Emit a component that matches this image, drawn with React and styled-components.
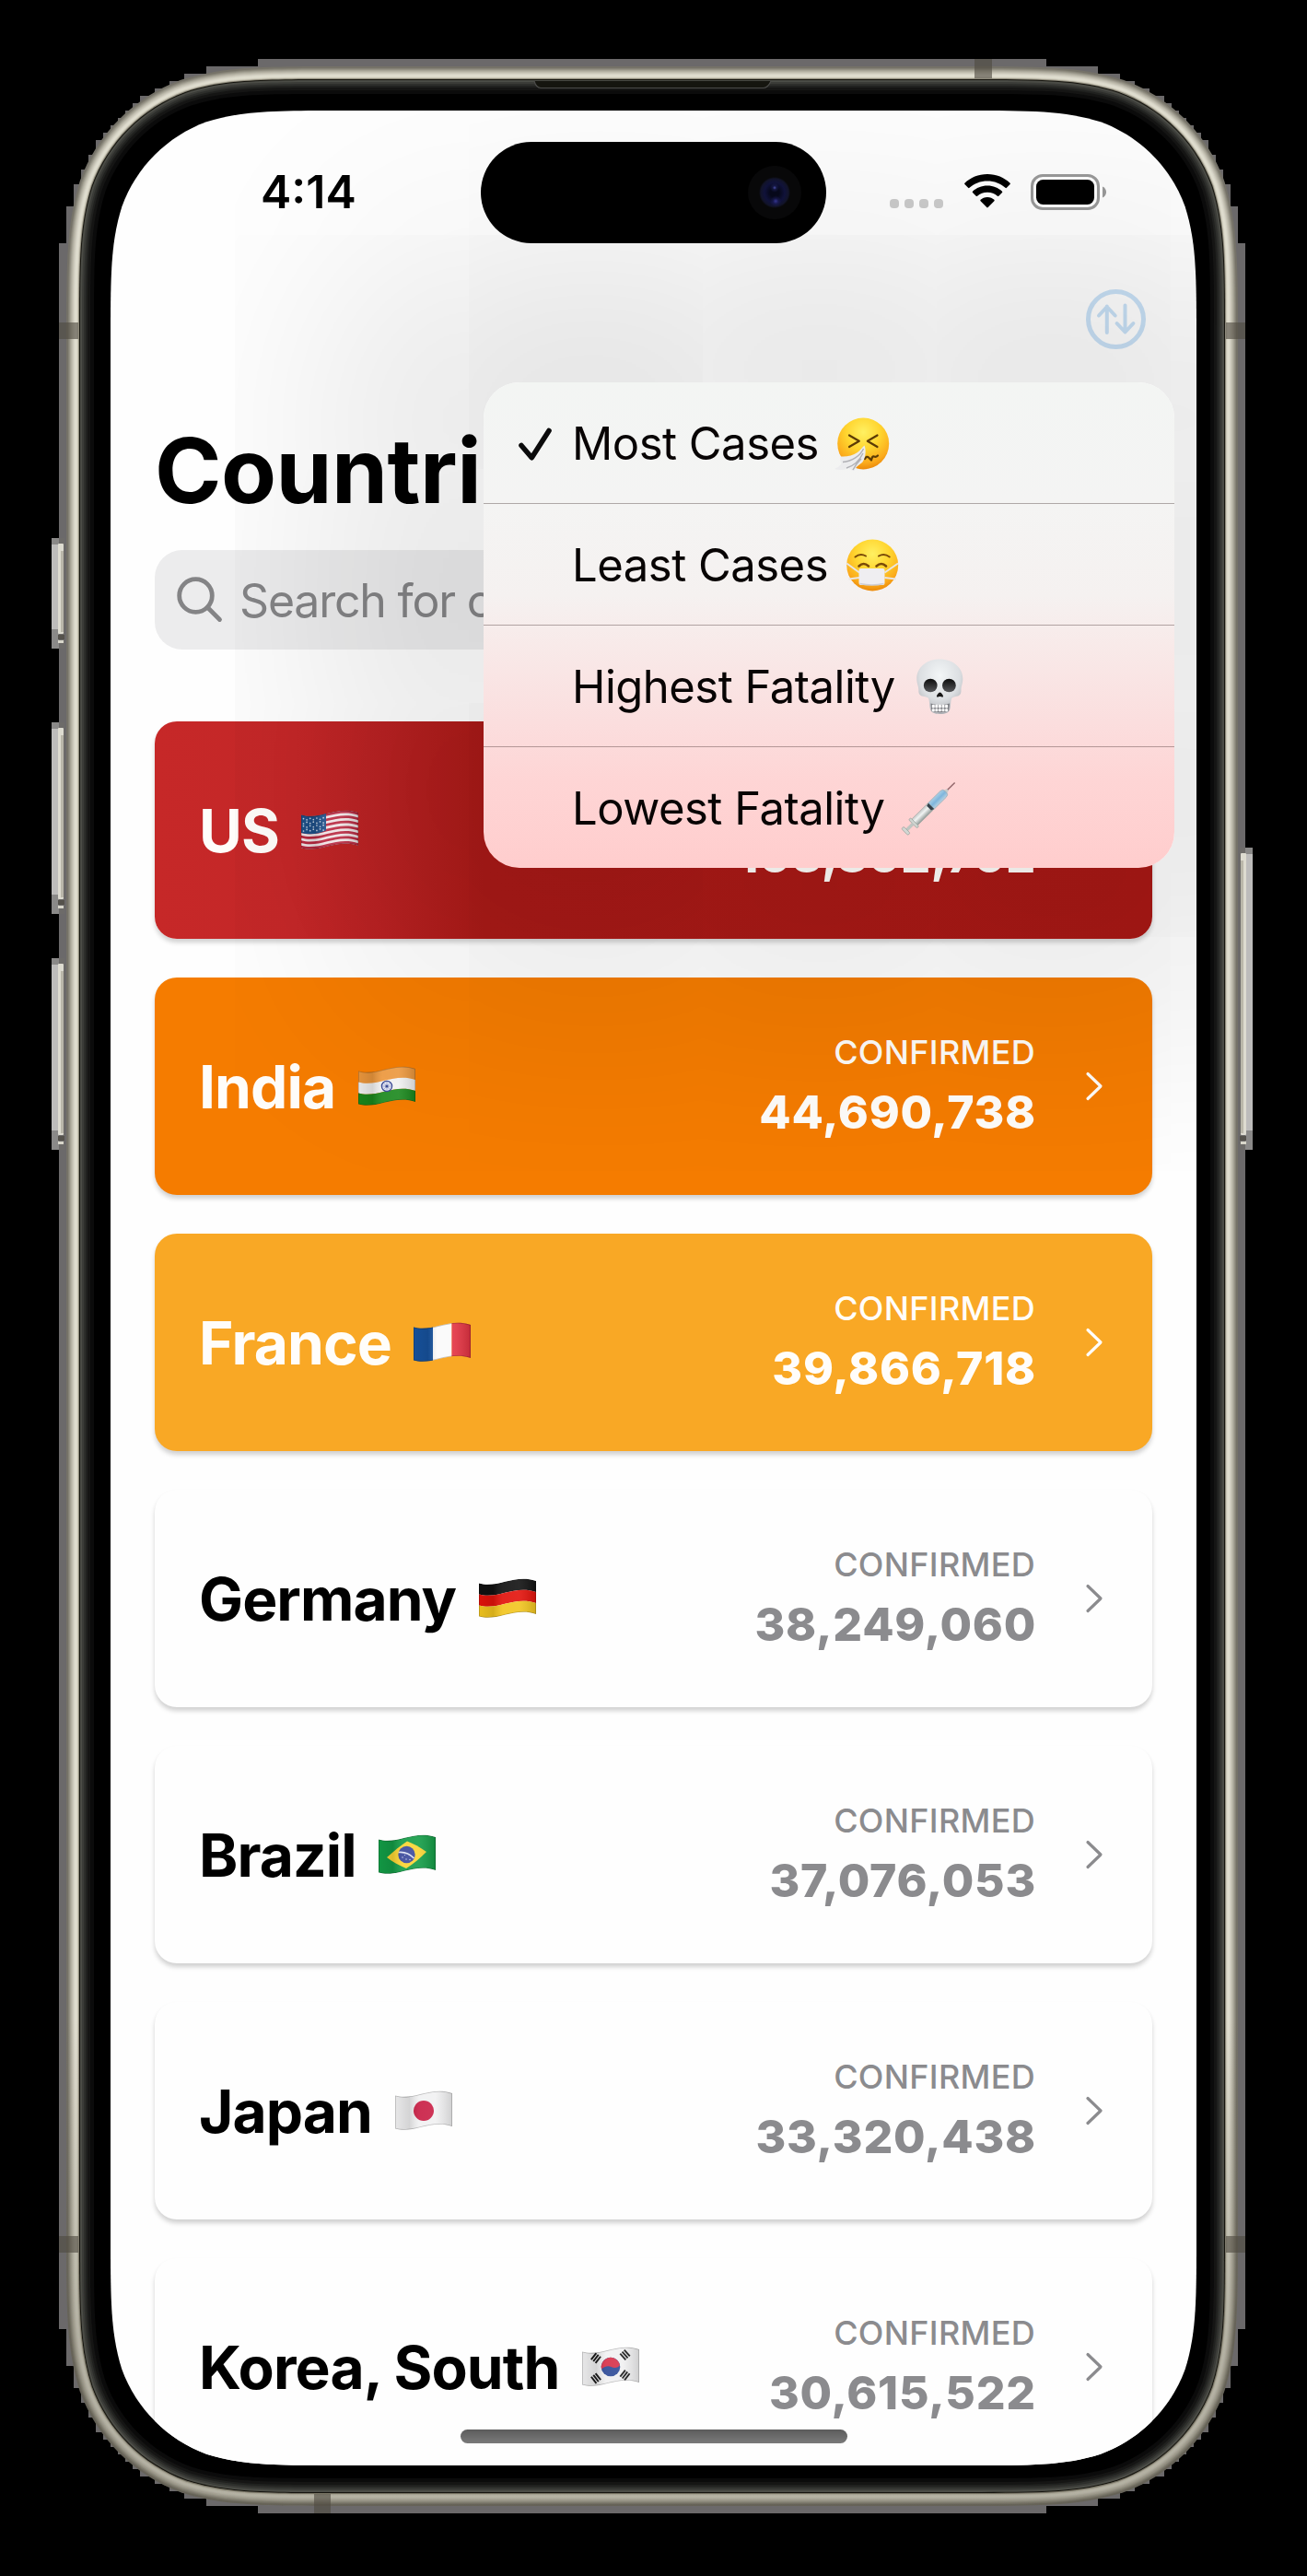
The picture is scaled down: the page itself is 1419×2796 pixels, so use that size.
import React from 'react';
import styled, { createGlobalStyle } from 'styled-components';

const GlobalStyle = createGlobalStyle`
  *, *::before, *::after { box-sizing: border-box; }
  html, body { margin: 0; padding: 0; background: #000; }
  body { font-family: Inter, "Liberation Sans", sans-serif; }
`;

/* ---------- geometry helpers ---------- */

/* Rounded rectangle with continuous (iOS style) corners. */
function squircle(x, y, w, h, r) {
  const A = 1.528665, B = 1.08849, C = 0.86841, D = 0.63149, E = 0.07491, F = 0.37282, G = 0.16906;
  const X = x + w;
  const Y = y + h;
  const p = (px, py) => `${px.toFixed(2)} ${py.toFixed(2)}`;
  return [
    `M${p(x + A * r, y)}L${p(X - A * r, y)}`,
    `C${p(X - B * r, y)} ${p(X - C * r, y)} ${p(X - D * r, y + E * r)}`,
    `C${p(X - F * r, y + G * r)} ${p(X - G * r, y + F * r)} ${p(X - E * r, y + D * r)}`,
    `C${p(X, y + C * r)} ${p(X, y + B * r)} ${p(X, y + A * r)}`,
    `L${p(X, Y - A * r)}`,
    `C${p(X, Y - B * r)} ${p(X, Y - C * r)} ${p(X - E * r, Y - D * r)}`,
    `C${p(X - G * r, Y - F * r)} ${p(X - F * r, Y - G * r)} ${p(X - D * r, Y - E * r)}`,
    `C${p(X - C * r, Y)} ${p(X - B * r, Y)} ${p(X - A * r, Y)}`,
    `L${p(x + A * r, Y)}`,
    `C${p(x + B * r, Y)} ${p(x + C * r, Y)} ${p(x + D * r, Y - E * r)}`,
    `C${p(x + F * r, Y - G * r)} ${p(x + G * r, Y - F * r)} ${p(x + E * r, Y - D * r)}`,
    `C${p(x, Y - C * r)} ${p(x, Y - B * r)} ${p(x, Y - A * r)}`,
    `L${p(x, y + A * r)}`,
    `C${p(x, y + B * r)} ${p(x, y + C * r)} ${p(x + E * r, y + D * r)}`,
    `C${p(x + G * r, y + F * r)} ${p(x + F * r, y + G * r)} ${p(x + D * r, y + E * r)}`,
    `C${p(x + C * r, y)} ${p(x + B * r, y)} ${p(x + A * r, y)}Z`,
  ].join('');
}

/* Stepped silhouette of the outer edge: [x, bottom of that step]. */
const STEPS = [
  [280, 72], [224, 80], [200, 88], [184, 96], [168, 104], [152, 112], [144, 120], [136, 128], [128, 136],
  [120, 144], [112, 152], [104, 168], [96, 184], [88, 200], [80, 224], [72, 264], [64, 300],
];

function steppedEdge() {
  const left = [];
  let top = 64;
  STEPS.forEach(([x, bottom]) => {
    left.push([x, top], [x, bottom]);
    top = bottom;
  });
  const right = left.map(([x, y]) => [1416 - x, y]);
  const down = (pts) => pts.map(([x, y]) => [x, 2792 - y]);
  const all = [...right, ...down(right).reverse(), ...down(left), ...left.slice().reverse()];
  return all.map((q) => q.join(',')).join(' ');
}

const METAL = [
  [8, '#757268'], [10, '#858276'], [11, '#949184'], [12, '#a5a295'], [13, '#b3b0a2'], [14, '#c0bdaf'],
  [15, '#cbc8ba'], [16, '#d6d3c6'], [17, '#dddbcd'], [18, '#e0decf'], [19, '#dbd8ca'], [20, '#cac7b7'],
  [21, '#8d897a'], [22, '#15140e'], [23, '#4b4c46'], [25, '#3b3c38'], [27, '#2d2e2b'], [29, '#20211f'],
  [31, '#151514'], [34, '#0b0b0b'], [38, '#000'],
];

/* ---------- hardware ---------- */

const HardwareSvg = styled.svg`
  position: absolute;
  inset: 0;
  pointer-events: none;
`;

function SideKey({ x, y, h, flip }) {
  return (
    <g transform={flip ? `translate(${x + 14} ${y}) scale(-1 1)` : `translate(${x} ${y})`}>
      <rect width="14" height={h} fill="#6d6b69" />
      <rect width="8" height={h} fill="#8a8988" />
      <rect y="7" width="7" height={h - 28} fill="#bdbcbb" />
      <rect x="7" y="6" width="6" height={h - 22} rx="1" fill="#dddbd0" />
      <rect x="10" y="14" width="3" height={h - 32} fill="#bab7aa" />
      <rect x="7" y={h - 15} width="7" height="5" fill="#55524c" />
      <rect x="7" y={h - 9} width="6" height="3" fill="#d8d6ca" />
    </g>
  );
}

function Hardware() {
  return (
    <HardwareSvg width="1419" height="2796" viewBox="0 0 1419 2796" aria-hidden="true">
      <defs>
        <linearGradient id="hwShade" x1="0" y1="0" x2="0" y2="1">
          <stop offset="0.8" stopColor="#3a3628" stopOpacity="0" />
          <stop offset="0.93" stopColor="#3a3628" stopOpacity="0.26" />
          <stop offset="1" stopColor="#3a3628" stopOpacity="0.26" />
        </linearGradient>
      </defs>
      <polygon points={steppedEdge()} fill="#6b696a" shapeRendering="crispEdges" />
      {METAL.map(([inset, color]) => (
        <path
          key={inset}
          d={squircle(64 + inset, 64 + inset, 1288 - 2 * inset, 2664 - 2 * inset, 205 - inset)}
          fill={color}
        />
      ))}
      <path
        fillRule="evenodd"
        fill="url(#hwShade)"
        d={squircle(72, 72, 1272, 2648, 197) + squircle(86, 86, 1244, 2620, 183)}
      />
      <SideKey x={56} y={584} h={120} />
      <SideKey x={56} y={784} h={208} />
      <SideKey x={56} y={1040} h={208} />
      <SideKey x={1346} y={920} h={328} flip />
      <g fill="#4f4b40" fillOpacity="0.62">
        <rect x="64" y="350" width="21" height="18" />
        <rect x="1331" y="350" width="21" height="18" />
        <rect x="64" y="2427" width="21" height="18" />
        <rect x="1331" y="2427" width="21" height="18" />
        <rect x="1058" y="64" width="19" height="21" />
        <rect x="341" y="2707" width="18" height="21" />
      </g>
      <path d="M580 88 Q582 95 587 95.500 H829 Q834 95 837 88 Z" fill="#15150f" />
      <path d="M580 88 Q582 95 587 95.500 H829 Q834 95 837 88" fill="none" stroke="#4c4c4a" strokeWidth="1.200" />
    </HardwareSvg>
  );
}

/* ---------- icons ---------- */

const Icon = styled.svg`
  display: block;
  flex: none;
  overflow: visible;
`;

const SignalDots = styled.div`
  display: flex;
  gap: 6px;
  margin-top: 26px;
  & > i {
    width: 10px;
    height: 10px;
    border-radius: 4px;
    background: #cbcbcb;
  }
`;

const WifiIcon = () => (
  <Icon width="50" height="38" viewBox="0 0 50 38" fill="#000" aria-label="Wi-Fi">
    <path d="M25 0C34.800 0 43.300 3.700 49.600 9.700Q50.300 10.400 49.600 11.100L45.900 14.800Q45.200 15.500 44.500 14.800C39.400 10 32.600 7.400 25 7.400S10.600 10 5.500 14.800Q4.800 15.500 4.100 14.800L.4 11.100Q-.3 10.400.4 9.700C6.700 3.700 15.200 0 25 0Z" />
    <path d="M25 12.500C31.400 12.500 36.900 14.900 41 18.700Q41.700 19.400 41 20.100L37.300 23.700Q36.600 24.400 35.900 23.800C33 21.300 29.300 19.800 25 19.800S17 21.300 14.100 23.800Q13.400 24.400 12.700 23.700L9 20.100Q8.300 19.400 9 18.700C13.100 14.900 18.600 12.500 25 12.500Z" />
    <path d="M25 25C28 25 30.500 26.100 32.400 27.800Q33.100 28.500 32.400 29.200L25.700 36Q25 36.800 24.300 36L17.600 29.200Q16.900 28.500 17.600 27.800C19.500 26.100 22 25 25 25Z" />
  </Icon>
);

const BatteryIcon = () => (
  <Icon width="83" height="39" viewBox="0 0 83 39" aria-label="Battery">
    <rect x="1.500" y="1.500" width="72" height="36" rx="11.500" fill="none" stroke="#9a9a9a" strokeWidth="3" />
    <rect x="6" y="6" width="63" height="27" rx="7.500" fill="#000" />
    <path d="M78 13.500C80.700 14.700 82 17 82 19.500S80.700 24.300 78 25.500Z" fill="#9a9a9a" />
  </Icon>
);

const SortIcon = () => (
  <Icon width="65" height="65" viewBox="0 0 65 65" fill="none" stroke="#c8e0f6" aria-label="Sort">
    <circle cx="32.500" cy="32.500" r="30" strokeWidth="5" />
    <path
      d="M22.800 47V18.500M14 28.500L22.800 19L31.700 28.500M42.500 17.500V46.500M33.600 37L42.500 46.500L51.400 37"
      strokeWidth="4"
      strokeLinecap="round"
      strokeLinejoin="round"
    />
  </Icon>
);

const SearchIcon = () => (
  <Icon width="50" height="50" viewBox="0 0 50 50" fill="none" stroke="#848486" strokeWidth="4.800" aria-hidden="true">
    <circle cx="20.500" cy="20.500" r="17.800" />
    <path d="M33.300 33.300L46.500 46.500" strokeLinecap="round" />
  </Icon>
);

const CheckIcon = () => (
  <Icon width="36" height="40" viewBox="0 0 36 40" fill="none" aria-label="Selected">
    <path d="M3 22.500L14.300 35.700L33 6.500" stroke="#0b0b0b" strokeWidth="5.600" strokeLinecap="round" strokeLinejoin="round" />
  </Icon>
);

const ChevronIcon = ({ color }) => (
  <Icon width="18" height="32" viewBox="0 0 18 32" fill="none" aria-hidden="true">
    <path d="M2 2.500L16 16L2 29.500" stroke={color} strokeWidth="3.200" strokeLinecap="round" strokeLinejoin="round" />
  </Icon>
);

/* ---------- emoji ---------- */

const FaceBase = ({ id }) => (
  <>
    <defs>
      <radialGradient id={id} cx="0.5" cy="0.28" r="0.74">
        <stop offset="0" stopColor="#fff062" />
        <stop offset="0.45" stopColor="#ffd52f" />
        <stop offset="0.8" stopColor="#fbab1c" />
        <stop offset="1" stopColor="#e98407" />
      </radialGradient>
    </defs>
    <circle cx="30.200" cy="30.500" r="28" fill={`url(#${id})`} />
  </>
);

const SneezeEmoji = () => (
  <Icon width="60" height="60" viewBox="0 0 60 60" aria-label="Sneezing face">
    <FaceBase id="faceSneeze" />
    <g fill="none" stroke="#5c3b05" strokeWidth="2.200" strokeLinejoin="round" strokeLinecap="round">
      <path d="M15 21.500L25.800 27.800L15 34M45.500 21.500L34.800 27.800L45.500 34" />
      <path d="M32 47Q34 43.500 36 45.500T39 48.500Q40 43.500 42 44.500T46 43.500" />
    </g>
    <path d="M31.500 32.500C33.500 37 33 45 29.500 50.500C26.500 53.500 23 54.500 20.500 60C18 60.500 16 58 14.500 57C10 59.500 4 59.500 -1 58C2 56.500 5.500 54.500 6.500 52C5 49.500 5 46.500 6 44.500C12 45 19 43.500 24 40C27 38 29 34.500 31.500 32.500Z" fill="#ececee" />
    <path d="M30.500 36C27 44 18 49.500 8 50.500M30 41C26 49 19 55 12 57M28 47C24 51 21 55 19 59" fill="none" stroke="#b1b1b6" strokeWidth="1.400" />
  </Icon>
);

const MaskEmoji = () => (
  <Icon width="60" height="60" viewBox="0 0 60 60" aria-label="Face with medical mask">
    <FaceBase id="faceMask" />
    <g fill="none" stroke="#7a4a08" strokeLinecap="round">
      <path d="M11.500 21.500Q17 17 23 20.500M37 20.500Q43 17 48.800 21.500" strokeWidth="2" />
      <path d="M15.500 31.500Q20.500 26.500 26 31.500M34.500 31.500Q40 26.500 45 31.500" strokeWidth="2.600" />
    </g>
    <path d="M2.300 28.500L16 38.500M4.500 45.500L16 44M58 28.500L43.500 38.500M55.800 45.500L43.500 44" stroke="#e9e6e4" strokeWidth="2" />
    <rect x="15.500" y="34" width="28" height="18" rx="2" fill="#efeef1" />
    <path d="M16.500 50.500Q30 53.500 42.500 50.500" stroke="#cfced4" strokeWidth="1.400" fill="none" />
  </Icon>
);

const SkullEmoji = () => (
  <Icon width="60" height="60" viewBox="0 0 60 60" aria-label="Skull">
    <defs>
      <radialGradient id="bone" cx="0.5" cy="0.3" r="0.72">
        <stop offset="0" stopColor="#f3f6f7" />
        <stop offset="0.6" stopColor="#dcdfe2" />
        <stop offset="1" stopColor="#a9abb0" />
      </radialGradient>
      <linearGradient id="socket" x1="0" y1="0" x2="0" y2="1">
        <stop offset="0" stopColor="#0c0c0c" />
        <stop offset="1" stopColor="#56575a" />
      </linearGradient>
    </defs>
    <path d="M30.300.5C45 .5 55.300 10 55.300 21.500C55.300 27 53.500 30 53.500 33.500C53.500 36.500 53.500 38.500 51 40C48.500 41.500 44.500 41 43.300 43C42 45.500 42.500 49 41.500 54C40.800 58.500 36.500 60 30.700 60S20.500 58.500 19.800 54C18.800 49 19.300 45.500 18 43C16.800 41 12.500 41.500 9.800 40C7.300 38.500 7.300 36.500 7.300 33.500C7.300 30 5.300 27 5.300 21.500C5.300 10 15.500.5 30.300.5Z" fill="url(#bone)" />
    <ellipse cx="20.200" cy="29" rx="7.400" ry="7.300" fill="url(#socket)" />
    <ellipse cx="40.400" cy="29" rx="7.400" ry="7.300" fill="url(#socket)" />
    <path d="M30.500 36.500C32 36.500 34.500 40.200 34 41.200C33.300 42 31.500 41 30.500 41S27.700 42 27 41.200C26.500 40.200 29 36.500 30.500 36.500Z" fill="#161616" />
    <path d="M20.500 48.500Q30.500 52 41 48.500L40 56.500Q30.500 60 21.300 56.500Z" fill="#7c7d82" />
    <g fill="#fbfbfb">
      {[21.8, 25.3, 28.9, 32.5, 36.1].map((x) => (
        <React.Fragment key={x}>
          <rect x={x} y="49.800" width="3" height="3.700" rx="1" />
          <rect x={x} y="54.200" width="3" height="3" rx="1" />
        </React.Fragment>
      ))}
    </g>
  </Icon>
);

const SyringeEmoji = () => (
  <Icon width="60" height="60" viewBox="0 0 60 60" aria-label="Syringe">
    <defs>
      <linearGradient id="barrel" x1="0" y1="0" x2="0" y2="1">
        <stop offset="0" stopColor="#c3c7c6" />
        <stop offset="0.4" stopColor="#f1f4f3" />
        <stop offset="1" stopColor="#8f9895" />
      </linearGradient>
      <linearGradient id="fluid" x1="0" y1="0" x2="0" y2="1">
        <stop offset="0" stopColor="#a8cfe6" />
        <stop offset="0.5" stopColor="#7fb5dc" />
        <stop offset="1" stopColor="#b9d3e2" />
      </linearGradient>
    </defs>
    <g transform="translate(58.700 2.500) rotate(135.500)">
      <rect x="0" y="-0.600" width="16" height="1.400" fill="#8f6468" />
      <path d="M11 -1.500L15 -2.500V2.500L11 1.500Z" fill="#c9cccb" />
      <g transform="translate(14 5) scale(1 -0.840)">
        <rect x="0" y="0.500" width="26" height="11" rx="4" fill="url(#fluid)" stroke="#9aaab4" strokeWidth="0.800" />
        <rect x="22" y="0.500" width="26" height="11" rx="1.500" fill="url(#barrel)" stroke="#9aa3a0" strokeWidth="0.600" />
        <path d="M22 0.800L25.500 2V10L22 11.200Z" fill="#34404a" />
      </g>
      <rect x="61" y="-6.500" width="3" height="13" rx="1.500" fill="#cfd4d0" stroke="#97a09b" strokeWidth="0.700" />
      <rect x="63.500" y="-1.800" width="11" height="3.600" fill="#bfc5c1" />
      <rect x="73" y="-5" width="3.400" height="10" rx="1.500" fill="#d2d7d3" stroke="#97a09b" strokeWidth="0.700" />
    </g>
  </Icon>
);

/* ---------- flags ---------- */

const FLAG_H = 36;
/* Horizontal band of a waving flag between two vertical offsets. */
const band = (a, b) =>
  `M0 ${5.5 + a}C20 ${11.500 + a} 38 ${-5 + a} 62 ${3 + a}V${3 + b}C38 ${-5 + b} 20 ${11.500 + b} 0 ${5.500 + b}Z`;

function FlagShell({ id, label, children }) {
  return (
    <Icon width="62" height="44" viewBox="0 0 62 44" aria-label={label}>
      <defs>
        <clipPath id={`${id}Clip`}>
          <path d={band(0, FLAG_H)} />
        </clipPath>
        <linearGradient id={`${id}Fold`} x1="0" y1="0" x2="1" y2="0">
          <stop offset="0" stopColor="#000" stopOpacity="0.04" />
          <stop offset="0.25" stopColor="#000" stopOpacity="0.12" />
          <stop offset="0.42" stopColor="#fff" stopOpacity="0.08" />
          <stop offset="0.7" stopColor="#fff" stopOpacity="0.1" />
          <stop offset="1" stopColor="#000" stopOpacity="0.14" />
        </linearGradient>
      </defs>
      <g clipPath={`url(#${id}Clip)`}>
        {children}
        <rect width="62" height="44" fill={`url(#${id}Fold)`} />
        <path d={band(0, FLAG_H)} fill="none" stroke="#000" strokeOpacity="0.22" strokeWidth="1.600" />
      </g>
    </Icon>
  );
}

const UsFlag = () => (
  <FlagShell id="us" label="Flag of the United States">
    <path d={band(0, 36)} fill="#fbeef0" />
    {Array.from({ length: 7 }, (_, i) => (
      <path key={i} d={band((i * 72) / 13, (i * 72 + 36) / 13)} fill="#c22b44" />
    ))}
    <path d="M0 5C10 8.500 19 6.500 27 3V22.500C19 26 10 27.500 0 25Z" fill="#21548f" />
    <g fill="#cfe0f2">
      {Array.from({ length: 28 }, (_, i) => (
        <circle key={i} cx={2.5 + (i % 7) * 3.6} cy={9.6 + Math.floor(i / 7) * 4 + (i % 2) * 1.4 - (i % 7) * 0.15} r="0.850" />
      ))}
    </g>
  </FlagShell>
);

const IndiaFlag = () => (
  <FlagShell id="in" label="Flag of India">
    <path d={band(0, 12)} fill="#f09a3e" />
    <path d={band(12, 24)} fill="#f4f4f4" />
    <path d={band(24, 36)} fill="#1b8a1d" />
    <circle cx="31" cy="22" r="5.600" fill="#dfe2f2" stroke="#2b3a8c" strokeWidth="1.300" />
    <path d="M31 16.500V27.500M25.500 22H36.500M27 18L35 26M35 18L27 26" stroke="#6f7ab5" strokeWidth="0.500" />
    <circle cx="31" cy="22" r="1.600" fill="#2b3a8c" />
  </FlagShell>
);

const FranceFlag = () => (
  <FlagShell id="fr" label="Flag of France">
    <rect width="21" height="44" fill="#17539f" />
    <rect x="21" width="20.500" height="44" fill="#fafafa" />
    <rect x="41.500" width="21" height="44" fill="#e33241" />
  </FlagShell>
);

const GermanyFlag = () => (
  <FlagShell id="de" label="Flag of Germany">
    <path d={band(0, 12)} fill="#111" />
    <path d={band(12, 24)} fill="#e3120b" />
    <path d={band(24, 36)} fill="#f2c51f" />
  </FlagShell>
);

const BrazilFlag = () => (
  <FlagShell id="br" label="Flag of Brazil">
    <path d={band(0, 36)} fill="#139c46" />
    <path d="M9 25C17 18 24 12 31 7.500C38 10 45 14 52 19C45 26 38 32 30 37C23 34 15 30 9 25Z" fill="#fbd432" />
    <circle cx="30.500" cy="22" r="9.200" fill="#3c4a9c" />
    <path d="M21.800 19.500Q31 18.500 38.500 26" stroke="#dfe4f4" strokeWidth="1.600" fill="none" />
    <g fill="#cdd3ee">
      <circle cx="26" cy="25" r="0.700" />
      <circle cx="30" cy="27" r="0.700" />
      <circle cx="34" cy="27.500" r="0.700" />
      <circle cx="28.500" cy="22.500" r="0.600" />
    </g>
  </FlagShell>
);

const JapanFlag = () => (
  <FlagShell id="jp" label="Flag of Japan">
    <path d={band(0, 36)} fill="#f1f1f2" />
    <circle cx="31" cy="22" r="11" fill="#c91f45" />
  </FlagShell>
);

const Trigram = ({ x, y, angle }) => (
  <g transform={`translate(${x} ${y}) rotate(${angle})`} fill="#1a1a1a">
    <rect x="-4.500" y="-4" width="9" height="1.900" />
    <rect x="-4.500" y="-1" width="9" height="1.900" />
    <rect x="-4.500" y="2" width="9" height="1.900" />
  </g>
);

const KoreaFlag = () => (
  <FlagShell id="kr" label="Flag of South Korea">
    <path d={band(0, 36)} fill="#f1f1f2" />
    <circle cx="31" cy="22" r="10.300" fill="#2f4c98" />
    <path d="M21 24.500A10.300 10.300 0 0 1 41.100 19.800C39.500 23 35 24 31.500 22C27.500 20 23.500 22.500 21 24.500Z" fill="#d8324a" />
    <Trigram x={15} y={12.5} angle={-52} />
    <Trigram x={46.5} y={9} angle={48} />
    <Trigram x={15} y={34.5} angle={52} />
    <Trigram x={46.5} y={31} angle={-52} />
  </FlagShell>
);

/* ---------- page ---------- */

const Stage = styled.main`
  position: relative;
  width: 1419px;
  height: 2796px;
  padding: 120px;
  overflow: hidden;
  background: #000;
`;

const Screen = styled.section`
  position: relative;
  display: flex;
  flex-direction: column;
  width: 1179px;
  height: 2556px;
  overflow: hidden;
  background: #fefefe;
  clip-path: path("${squircle(0, 0, 1179, 2556, 165)}");
`;

const StatusBar = styled.header`
  flex: none;
  display: flex;
  align-items: center;
  justify-content: space-between;
  height: 176px;
  padding: 0 97px 0 163px;
`;

const Clock = styled.time`
  font-size: 50px;
  font-weight: 600;
  line-height: 60px;
  color: #000;
`;

const StatusIcons = styled.div`
  display: flex;
  align-items: center;
`;

const WifiSlot = styled.div`
  margin: 0 22px 0 23px;
`;

const Island = styled.div`
  position: absolute;
  left: 402px;
  top: 34px;
  display: flex;
  align-items: center;
  justify-content: flex-end;
  width: 375px;
  height: 110px;
  padding-right: 27px;
  border-radius: 55px;
  background: #000;
`;

const Camera = styled.div`
  width: 58px;
  height: 58px;
  border-radius: 50%;
  background:
    radial-gradient(circle at 50% 41%, #4a4fa8 0, rgba(40, 44, 120, 0.4) 2px, transparent 5px),
    radial-gradient(circle at 52% 66%, #35358e 0, rgba(35, 35, 110, 0.4) 3px, transparent 6px),
    radial-gradient(circle, #06081a 0 5px, #10123a 11px, #12142a 15px, #080809 17px);
`;

const NavBar = styled.nav`
  flex: none;
  display: flex;
  align-items: center;
  justify-content: flex-end;
  height: 101px;
  padding-right: 55px;
`;

const Title = styled.h1`
  flex: none;
  margin: 54px 48px 0;
  font-size: 98px;
  font-weight: 750;
  line-height: 120px;
  letter-spacing: -0.5px;
  color: #000;
`;

const SearchField = styled.div`
  flex: none;
  display: flex;
  align-items: center;
  gap: 18px;
  height: 108px;
  margin: 26px 48px 0;
  padding-left: 24px;
  border-radius: 30px;
  background: #ececed;
  font-size: 50px;
  letter-spacing: -1.2px;
  color: #848486;
  white-space: nowrap;
`;

const Placeholder = styled.span`
  padding-top: 2px;
`;

const CardList = styled.ul`
  display: flex;
  flex-direction: column;
  gap: 42px;
  margin: 78px 48px 0;
  padding: 0;
  list-style: none;
`;

const Card = styled.li`
  flex: none;
  display: flex;
  align-items: center;
  height: 236px;
  padding: 0 54px 0 48px;
  border-radius: 24px;
  background: ${(p) => p.$bg};
  color: ${(p) => p.$fg};
  box-shadow: 0 4px 5px rgba(0, 0, 0, 0.18);
`;

const CountryName = styled.div`
  flex: 1;
  display: flex;
  align-items: center;
  gap: 24.5px;
  font-size: 64px;
  font-weight: 700;
  letter-spacing: -0.9px;
  white-space: nowrap;
`;

const Stats = styled.div`
  display: flex;
  flex-direction: column;
  align-items: flex-end;
  margin-right: 55px;
  color: ${(p) => p.$color};
`;

const StatLabel = styled.span`
  font-size: 36px;
  font-weight: 500;
  line-height: 56px;
  letter-spacing: 0.3px;
`;

const StatValue = styled.span`
  margin-right: -1px;
  font-size: 50px;
  font-weight: 800;
  line-height: 74px;
  letter-spacing: 0.75px;
`;

const Menu = styled.div`
  position: absolute;
  left: 405px;
  top: 295px;
  display: flex;
  flex-direction: column;
  width: 750px;
  border-radius: 39px;
  background: linear-gradient(
    180deg,
    #f3f5f3 0%,
    #f4f4f3 25%,
    #f5f1f0 44%,
    #f8eae9 54%,
    #fbdede 70%,
    #fed5d5 82%,
    #ffcdcd 100%
  );
  box-shadow: 0 0 250px 155px rgba(0, 0, 0, 0.105);
`;

const MenuItem = styled.button`
  display: flex;
  align-items: center;
  height: ${(p) => (p.$last ? 131 : 132)}px;
  padding: 0 0 0 38px;
  border: 0;
  border-bottom: ${(p) => (p.$last ? 'none' : '1px solid rgba(40, 20, 20, 0.34)')};
  background: none;
  font-family: inherit;
  font-size: 49px;
  font-weight: 400;
  letter-spacing: -0.5px;
  color: #080404;
  white-space: nowrap;
`;

const CheckSlot = styled.span`
  width: 58px;
`;

const MenuLabel = styled.span`
  margin-right: 18px;
  padding-top: 2px;
`;

const HomeIndicator = styled.div`
  position: absolute;
  left: 380px;
  bottom: 24px;
  width: 420px;
  height: 15px;
  border-radius: 8px;
  background: linear-gradient(#5c5c5c, #7a7a7a);
`;

const COUNTRIES = [
  {
    name: 'US', value: '103,802,702', Flag: UsFlag, tone: 'light',
    bg: 'linear-gradient(90deg, #c62828 0%, #c42728 14%, #b92122 23%, #aa1a17 33%, #a91815 100%)',
  },
  { name: 'India', value: '44,690,738', Flag: IndiaFlag, tone: 'light', bg: '#f57c00' },
  { name: 'France', value: '39,866,718', Flag: FranceFlag, tone: 'light', bg: '#f9a825' },
  { name: 'Germany', value: '38,249,060', Flag: GermanyFlag },
  { name: 'Brazil', value: '37,076,053', Flag: BrazilFlag },
  { name: 'Japan', value: '33,320,438', Flag: JapanFlag },
  { name: 'Korea, South', value: '30,615,522', Flag: KoreaFlag },
];

const SORTS = [
  { label: 'Most Cases', Emoji: SneezeEmoji, checked: true },
  { label: 'Least Cases', Emoji: MaskEmoji },
  { label: 'Highest Fatality', Emoji: SkullEmoji },
  { label: 'Lowest Fatality', Emoji: SyringeEmoji },
];

function CountryCard({ name, value, Flag, tone, bg = '#fefefe' }) {
  const light = tone === 'light';
  const accent = light ? '#fffdfa' : '#8b8b8e';
  return (
    <Card $bg={bg} $fg={light ? '#fffdfa' : '#000'}>
      <CountryName>
        {name}
        <Flag />
      </CountryName>
      <Stats $color={accent}>
        <StatLabel>CONFIRMED</StatLabel>
        <StatValue>{value}</StatValue>
      </Stats>
      <ChevronIcon color={accent} />
    </Card>
  );
}

export default function App() {
  return (
    <Stage>
      <GlobalStyle />
      <Hardware />
      <Screen>
        <StatusBar>
          <Clock>4:14</Clock>
          <StatusIcons>
            <SignalDots>
              <i />
              <i />
              <i />
              <i />
            </SignalDots>
            <WifiSlot>
              <WifiIcon />
            </WifiSlot>
            <BatteryIcon />
          </StatusIcons>
        </StatusBar>
        <NavBar>
          <SortIcon />
        </NavBar>
        <Title>Countries</Title>
        <SearchField>
          <SearchIcon />
          <Placeholder>Search for country</Placeholder>
        </SearchField>
        <CardList>
          {COUNTRIES.map((c) => (
            <CountryCard key={c.name} {...c} />
          ))}
        </CardList>
        <Menu role="menu">
          {SORTS.map(({ label, Emoji, checked }, i) => (
            <MenuItem key={label} role="menuitem" $last={i === SORTS.length - 1}>
              <CheckSlot>{checked && <CheckIcon />}</CheckSlot>
              <MenuLabel>{label}</MenuLabel>
              <Emoji />
            </MenuItem>
          ))}
        </Menu>
        <Island>
          <Camera />
        </Island>
        <HomeIndicator />
      </Screen>
    </Stage>
  );
}
